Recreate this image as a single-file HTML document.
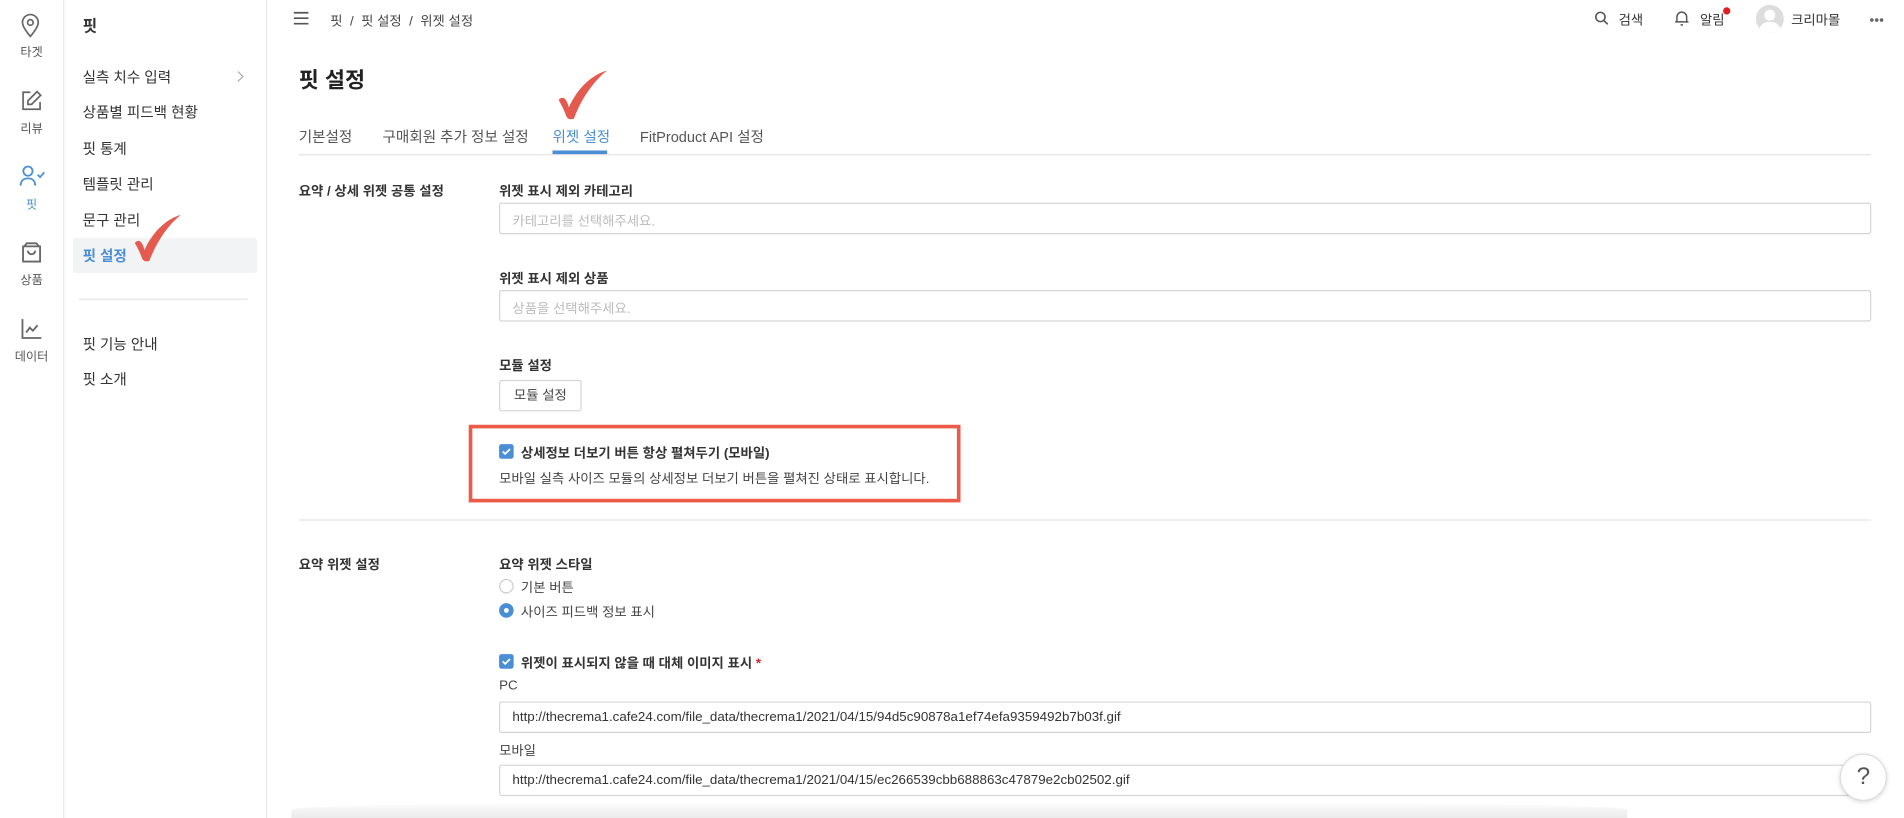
<!DOCTYPE html>
<html><head><meta charset="utf-8">
<style>
*{box-sizing:border-box;margin:0;padding:0}
html,body{width:1904px;height:818px;overflow:hidden;background:#fff}
#w{position:absolute;left:0;top:0;width:1568px;height:674px;transform:scale(1.21429,1.2136);transform-origin:0 0;font-family:"Liberation Sans","Noto Sans CJK KR",sans-serif;color:#333;font-size:12px}
.a{position:absolute;white-space:nowrap}
.rail{position:absolute;left:0;top:0;width:53px;height:674px;border-right:1px solid #e6e6e6}
.side{position:absolute;left:53px;top:0;width:167px;height:674px;border-right:1px solid #e6e6e6}
.ic{position:absolute;left:0;width:52px;text-align:center;font-size:10px;color:#555}
.mi{position:absolute;left:68px;font-size:12px;color:#333}
.lbl{font-weight:bold;font-size:11px;color:#333}
.inp{position:absolute;left:411px;width:1130px;height:26px;border:1px solid #d5d5d5;border-radius:2px;font-size:11px;padding:6px 10px;color:#bbb}
.cb{position:absolute;width:12px;height:12px;background:#4a8fd6;border-radius:2px}
.hr{position:absolute;left:246px;width:1295px;height:1px;background:#e3e3e3}
</style></head><body><div id="w">
<div class="rail">
 <svg class="a" style="left:17px;top:11px" width="16" height="20" viewBox="0 0 16 20" fill="none" stroke="#666" stroke-width="1.4"><path d="M8 19C3 13 1.5 10 1.5 7.5a6.5 6.5 0 0 1 13 0C14.5 10 13 13 8 19z"/><circle cx="8" cy="7.5" r="2.3"/></svg>
 <div class="ic" style="top:34px">타겟</div>
 <svg class="a" style="left:17px;top:74px" width="18" height="18" viewBox="0 0 18 18" fill="none" stroke="#666" stroke-width="1.4"><path d="M8 2H2v14h14v-6"/><path d="M13.5 1.5l3 3L9 12H6V9z"/></svg>
 <div class="ic" style="top:97px">리뷰</div>
 <svg class="a" style="left:16px;top:136px" width="22" height="18" viewBox="0 0 22 18" fill="none" stroke="#4a8fd6" stroke-width="1.5"><circle cx="7" cy="5" r="3.8"/><path d="M1 17c0-4 2.5-6 6-6s6 2 6 6"/><path d="M15 8l2 2 3.5-4"/></svg>
 <div class="ic" style="top:160px;color:#4a8fd6">핏</div>
 <svg class="a" style="left:17px;top:199px" width="18" height="18" viewBox="0 0 18 18" fill="none" stroke="#666" stroke-width="1.5"><path d="M2 4h14v12.5H2z"/><path d="M3 4l2-2.5h8L15 4"/><path d="M6 7.5a3 3 0 0 0 6 0"/></svg>
 <div class="ic" style="top:222px">상품</div>
 <svg class="a" style="left:17px;top:262px" width="18" height="18" viewBox="0 0 18 18" fill="none" stroke="#666" stroke-width="1.5"><path d="M1.5 1v15.5H17"/><path d="M4.5 12l3-4 2.5 2.5L14 6"/></svg>
 <div class="ic" style="top:285px">데이터</div>
</div>
<div class="side">
 <div class="a" style="left:15px;top:11px;font-weight:bold;font-size:13px">핏</div>
 <div class="a" style="left:7px;top:196px;width:152px;height:29px;background:#f2f3f5;border-radius:3px"></div>
 <div class="a" style="left:12px;top:246px;width:139px;height:1px;background:#e3e3e3"></div>
 <svg class="a" style="left:141px;top:57px" width="8" height="12" viewBox="0 0 8 12" fill="none" stroke="#aaa"><path d="M2 2l4 4-4 4"/></svg>
</div>
<div class="mi" style="top:55px">실측 치수 입력</div>
<div class="mi" style="top:84px">상품별 피드백 현황</div>
<div class="mi" style="top:114px">핏 통계</div>
<div class="mi" style="top:143px">템플릿 관리</div>
<div class="mi" style="top:173px">문구 관리</div>
<div class="mi" style="top:202px;color:#4a8fd6;font-weight:bold">핏 설정</div>
<div class="mi" style="top:275px">핏 기능 안내</div>
<div class="mi" style="top:304px">핏 소개</div>
<svg class="a" style="left:108px;top:176px" width="46" height="42" viewBox="0 0 46 42"><path d="M3 24c3-3 6-2 8 6 7-15 17-25 30-29-11 9-20 22-26 38-3 1-5 0-6-2C7 31 5 28 3 24z" fill="#e55a4e"/></svg>
<svg class="a" style="left:456px;top:57px" width="50" height="44" viewBox="0 0 46 42"><path d="M3 24c3-3 6-2 8 6 7-15 17-25 30-29-11 9-20 22-26 38-3 1-5 0-6-2C7 31 5 28 3 24z" fill="#e55a4e"/></svg>

<svg class="a" style="left:241px;top:9px" width="14" height="12" viewBox="0 0 14 12" stroke="#555" stroke-width="1.4"><path d="M1 1.5h12M1 6h12M1 10.5h12"/></svg>
<div class="a" style="left:272px;top:9px;font-size:11px;color:#444">핏 &nbsp;/&nbsp; 핏 설정 &nbsp;/&nbsp; 위젯 설정</div>
<svg class="a" style="left:1313px;top:9px" width="12" height="12" viewBox="0 0 12 12" fill="none" stroke="#555" stroke-width="1.3"><circle cx="5" cy="5" r="3.8"/><path d="M8 8l3 3"/></svg>
<div class="a" style="left:1333px;top:8px;font-size:11px">검색</div>
<svg class="a" style="left:1379px;top:8px" width="12" height="14" viewBox="0 0 12 14" fill="none" stroke="#555" stroke-width="1.2"><path d="M2 10V6a4 4 0 0 1 8 0v4h1.5H.5z"/><path d="M5 12.5h2"/></svg>
<div class="a" style="left:1400px;top:8px;font-size:11px">알림</div>
<div class="a" style="left:1419px;top:6px;width:6px;height:6px;border-radius:50%;background:#e02020"></div>
<div class="a" style="left:1446px;top:4px;width:23px;height:23px;border-radius:50%;background:#ddd;overflow:hidden"><div class="a" style="left:7px;top:4px;width:9px;height:9px;border-radius:50%;background:#fff"></div><div class="a" style="left:3px;top:14px;width:17px;height:12px;border-radius:50%;background:#fff"></div></div>
<div class="a" style="left:1475px;top:8px;font-size:11px">크리마몰</div>
<div class="a" style="left:1540px;top:15px;width:3px;height:3px;border-radius:50%;background:#666"></div>
<div class="a" style="left:1544px;top:15px;width:3px;height:3px;border-radius:50%;background:#666"></div>
<div class="a" style="left:1548px;top:15px;width:3px;height:3px;border-radius:50%;background:#666"></div>

<div class="a" style="left:246px;top:52px;font-size:18px;font-weight:bold;color:#222">핏 설정</div>
<div class="a" style="left:246px;top:104px;font-size:12px;color:#555">기본설정</div>
<div class="a" style="left:315px;top:104px;font-size:12px;color:#555">구매회원 추가 정보 설정</div>
<div class="a" style="left:455px;top:104px;font-size:12px;color:#4a8fd6">위젯 설정</div>
<div class="a" style="left:527px;top:104px;font-size:12px;color:#555">FitProduct API 설정</div>
<div class="hr" style="top:127px"></div>
<div class="a" style="left:455px;top:124px;width:45px;height:3px;background:#4a8fd6"></div>

<div class="a lbl" style="left:246px;top:149px">요약 / 상세 위젯 공통 설정</div>
<div class="a lbl" style="left:411px;top:149px">위젯 표시 제외 카테고리</div>
<div class="inp" style="top:167px">카테고리를 선택해주세요.</div>
<div class="a lbl" style="left:411px;top:221px">위젯 표시 제외 상품</div>
<div class="inp" style="top:239px">상품을 선택해주세요.</div>
<div class="a lbl" style="left:411px;top:293px">모듈 설정</div>
<div class="a" style="left:411px;top:313px;width:68px;height:26px;border:1px solid #d5d5d5;border-radius:2px;text-align:center;line-height:24px;font-size:11px;color:#444">모듈 설정</div>

<div class="a" style="left:386px;top:350px;width:405px;height:64px;border:3px solid #ec5a48"></div>
<div class="cb" style="left:411px;top:366px"></div>
<svg class="a" style="left:411px;top:366px" width="12" height="12" viewBox="0 0 12 12" fill="none" stroke="#fff" stroke-width="1.5"><path d="M3 6l2 2 4-4"/></svg>
<div class="a lbl" style="left:429px;top:365px">상세정보 더보기 버튼 항상 펼쳐두기 (모바일)</div>
<div class="a" style="left:411px;top:386px;font-size:11px;color:#444">모바일 실측 사이즈 모듈의 상세정보 더보기 버튼을 펼쳐진 상태로 표시합니다.</div>
<div class="hr" style="top:428px"></div>

<div class="a lbl" style="left:246px;top:457px">요약 위젯 설정</div>
<div class="a lbl" style="left:411px;top:457px">요약 위젯 스타일</div>
<div class="a" style="left:411px;top:477px;width:12px;height:12px;border:1px solid #ccc;border-radius:50%"></div>
<div class="a" style="left:429px;top:476px;font-size:11px;color:#444">기본 버튼</div>
<div class="a" style="left:411px;top:497px;width:12px;height:12px;background:#4a8fd6;border-radius:50%"><div class="a" style="left:4px;top:4px;width:4px;height:4px;background:#fff;border-radius:50%"></div></div>
<div class="a" style="left:429px;top:496px;font-size:11px;color:#444">사이즈 피드백 정보 표시</div>

<div class="cb" style="left:411px;top:539px"></div>
<svg class="a" style="left:411px;top:539px" width="12" height="12" viewBox="0 0 12 12" fill="none" stroke="#fff" stroke-width="1.5"><path d="M3 6l2 2 4-4"/></svg>
<div class="a lbl" style="left:429px;top:538px">위젯이 표시되지 않을 때 대체 이미지 표시 <span style="color:#e02020">*</span></div>
<div class="a" style="left:411px;top:559px;font-size:11px;color:#444">PC</div>
<div class="inp" style="top:578px;color:#333;font-size:11px">http://thecrema1.cafe24.com/file_data/thecrema1/2021/04/15/94d5c90878a1ef74efa9359492b7b03f.gif</div>
<div class="a" style="left:411px;top:610px;font-size:11px;color:#444">모바일</div>
<div class="inp" style="top:630px;color:#333;font-size:11px">http://thecrema1.cafe24.com/file_data/thecrema1/2021/04/15/ec266539cbb688863c47879e2cb02502.gif</div>

<div class="a" style="left:240px;top:660px;width:1100px;height:14px;background:linear-gradient(to bottom,rgba(0,0,0,0),rgba(0,0,0,.08));border-radius:50% 50% 0 0"></div>
<div class="a" style="left:1515px;top:621px;width:39px;height:39px;border-radius:50%;background:#fff;border:1px solid #ddd;box-shadow:0 1px 4px rgba(0,0,0,.15);text-align:center;line-height:37px;font-size:20px;color:#555">?</div>
</div></body></html>
